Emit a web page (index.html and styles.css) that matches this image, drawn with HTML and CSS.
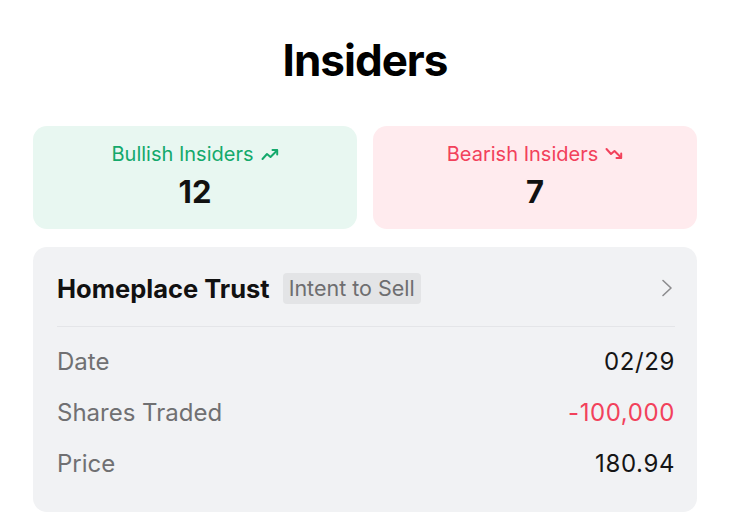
FILE: index.html
```html
<!DOCTYPE html>
<html>
<head>
<meta charset="utf-8">
<link rel="stylesheet" href="styles.css">
</head>
<body>
<div class="page">
  <h1 class="title">Insiders</h1>
  <div class="stats">
    <div class="stat stat-bull">
      <div class="stat-label">Bullish Insiders
        <svg class="trend" width="18" height="14" viewBox="0 0 18 14"><polyline points="1.5,12 6,7 9.5,10 16,3.5" fill="none" stroke="currentColor" stroke-width="2" stroke-linecap="round" stroke-linejoin="round"/><polyline points="11.5,3 16.2,3 16.2,7.5" fill="none" stroke="currentColor" stroke-width="2" stroke-linecap="round" stroke-linejoin="round"/></svg>
      </div>
      <div class="stat-value">12</div>
    </div>
    <div class="stat stat-bear">
      <div class="stat-label">Bearish Insiders
        <svg class="trend" width="18" height="14" viewBox="0 0 18 14"><polyline points="1.5,2 6,7 9.5,4 16,10.5" fill="none" stroke="currentColor" stroke-width="2" stroke-linecap="round" stroke-linejoin="round"/><polyline points="11.5,11 16.2,11 16.2,6.5" fill="none" stroke="currentColor" stroke-width="2" stroke-linecap="round" stroke-linejoin="round"/></svg>
      </div>
      <div class="stat-value">7</div>
    </div>
  </div>
  <div class="detail">
    <div class="detail-head">
      <span class="name">Homeplace Trust</span>
      <span class="badge">Intent to Sell</span>
      <svg class="chevron" width="12" height="18" viewBox="0 0 12 18"><polyline points="2,1.5 10,9 2,16.5" fill="none" stroke="#8c8c8e" stroke-width="1.6" stroke-linecap="round" stroke-linejoin="round"/></svg>
    </div>
    <div class="divider"></div>
    <div class="rows">
      <div class="row"><span class="label">Date</span><span class="value">02/29</span></div>
      <div class="row"><span class="label">Shares Traded</span><span class="value neg">-100,000</span></div>
      <div class="row"><span class="label">Price</span><span class="value">180.94</span></div>
    </div>
  </div>
</div>
</body>
</html>
```

FILE: styles.css
```css
html, body {
  margin: 0;
  padding: 0;
  background: #ffffff;
}
body {
  font-family: Inter, "Noto Sans", sans-serif;
  color: #111111;
}
.page {
  padding: 28px 35px 0 33px;
}
.title {
  margin: 0;
  height: 64px;
  line-height: 64px;
  text-align: center;
  font-size: 44px;
  font-weight: 700;
  letter-spacing: -1px;
  color: #000;
}
.stats {
  margin-top: 34px;
  display: grid;
  grid-template-columns: 1fr 1fr;
  gap: 16px;
}
.stat {
  border-radius: 14px;
  padding: 14px 0 19px;
  text-align: center;
}
.stat-bull { background: #e8f7f1; color: #14a96c; }
.stat-bear { background: #ffebee; color: #f2415b; }
.stat-label {
  font-size: 20px;
  line-height: 28px;
  display: flex;
  justify-content: center;
  align-items: center;
  gap: 7px;
}
.trend { display: block; }
.stat-value {
  margin-top: 6px;
  font-size: 31px;
  font-weight: 700;
  line-height: 36px;
  color: #111;
}
.detail {
  margin-top: 18px;
  background: #f1f2f4;
  border-radius: 14px;
  padding: 23px 22px 23px 24px;
}
.detail-head {
  display: flex;
  align-items: center;
  height: 36px;
}
.name {
  font-size: 25.5px;
  font-weight: 700;
  color: #111;
}
.badge {
  margin-left: 13px;
  background: #e3e4e6;
  color: #6e6e70;
  border-radius: 4px;
  font-size: 21.5px;
  line-height: 31px;
  padding: 0 6px;
}
.chevron {
  margin-left: auto;
  margin-right: 2px;
  display: block;
}
.divider {
  margin-top: 20px;
  height: 1px;
  background: #e4e5e8;
}
.rows {
  padding-top: 9px;
}
.row {
  display: flex;
  justify-content: space-between;
  align-items: center;
  height: 51px;
  font-size: 24px;
}
.label { color: #707072; }
.value { color: #151515; letter-spacing: 0.6px; }
.value.neg { color: #f2415b; }
```
